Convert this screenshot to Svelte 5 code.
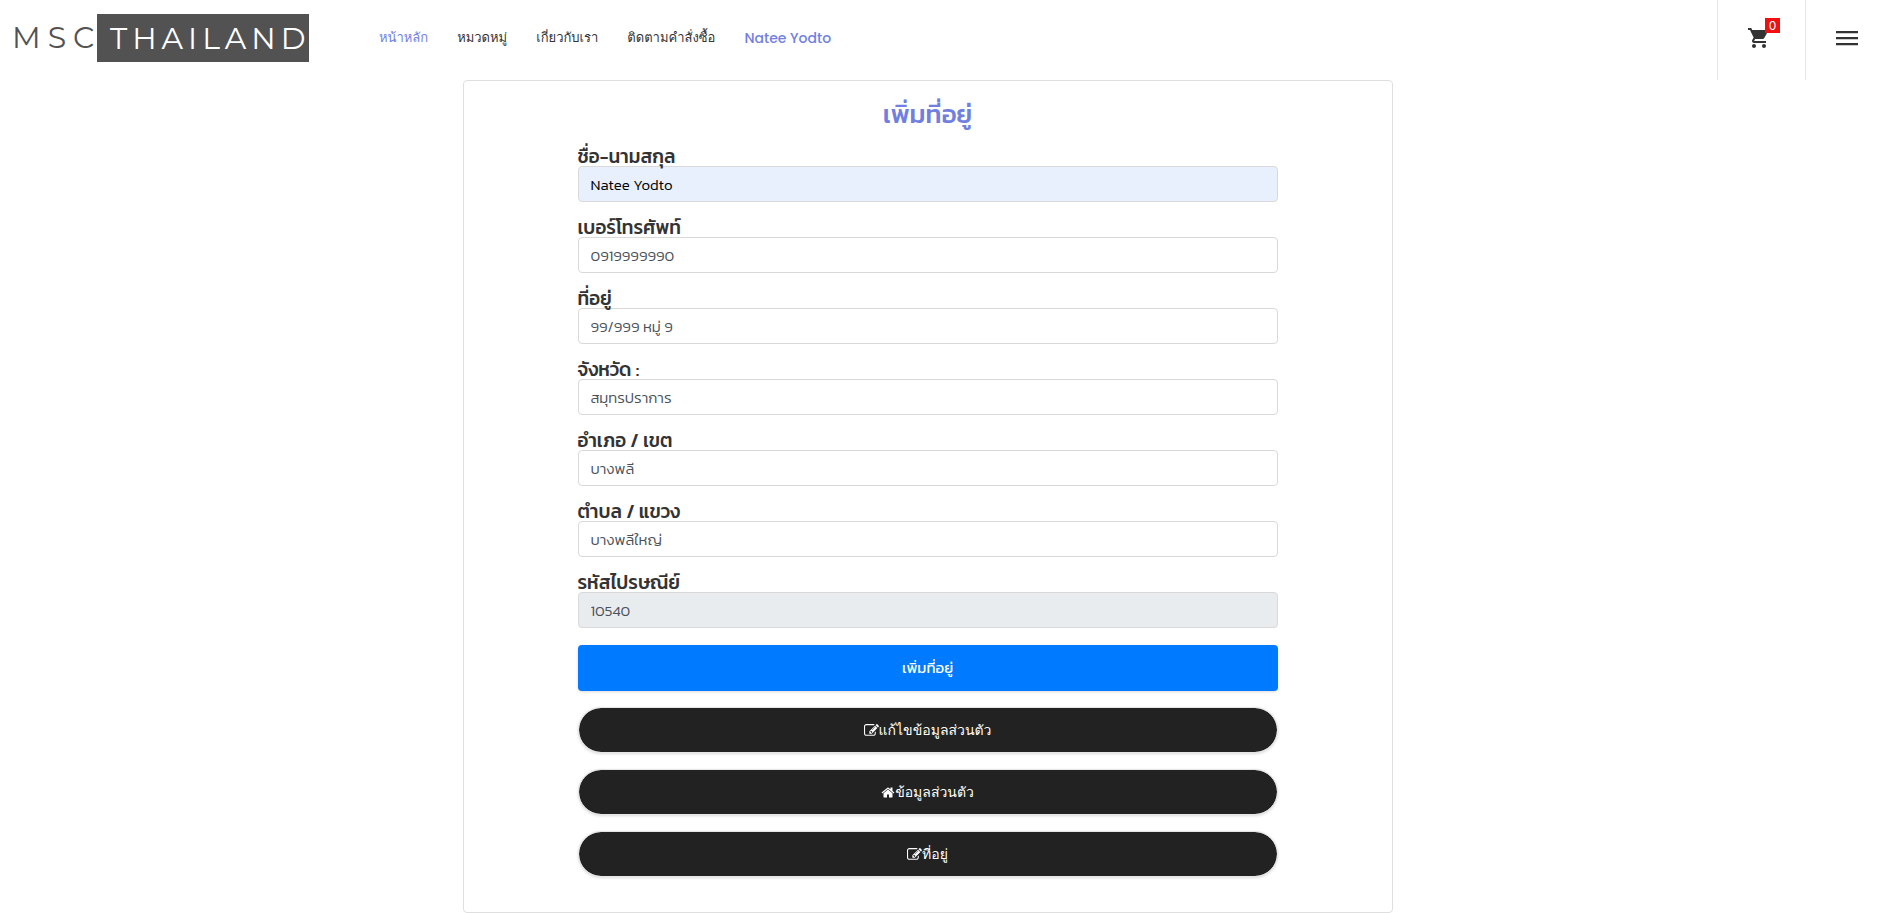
<script>
  const links = [
    { text: 'หน้าหลัก', active: true },
    { text: 'หมวดหมู่' },
    { text: 'เกี่ยวกับเรา' },
    { text: 'ติดตามคำสั่งซื้อ' },
  ];

  let fields = $state([
    { id: 'name', label: 'ชื่อ-นามสกุล', value: 'Natee Yodto', kind: 'autofill' },
    { id: 'phone', label: 'เบอร์โทรศัพท์', value: '0919999990' },
    { id: 'address', label: 'ที่อยู่', value: '99/999 หมู่ 9' },
    { id: 'province', label: 'จังหวัด :', value: 'สมุทรปราการ' },
    { id: 'district', label: 'อำเภอ / เขต', value: 'บางพลี' },
    { id: 'subdistrict', label: 'ตำบล / แขวง', value: 'บางพลีใหญ่' },
    { id: 'zip', label: 'รหัสไปรษณีย์', value: '10540', kind: 'locked' },
  ]);

  const actions = [
    { text: 'แก้ไขข้อมูลส่วนตัว', icon: 'edit' },
    { text: 'ข้อมูลส่วนตัว', icon: 'home' },
    { text: 'ที่อยู่', icon: 'edit' },
  ];
</script>

<header>
  <a class="logo" href="#home"><span class="msc">MSC</span><span class="thailand">THAILAND</span></a>
  <nav>
    {#each links as link}
      <a href="#top" class:active={link.active}>{link.text}</a>
    {/each}
    <a href="#account" class="user">Natee Yodto</a>
  </nav>
  <div class="tools">
    <button class="tool" aria-label="ตะกร้าสินค้า">
      <span class="cart">
        <svg width="24" height="24" viewBox="0 0 24 24" fill="#333" aria-hidden="true">
          <path d="M7 18c-1.1 0-1.99.9-1.99 2S5.900 22 7 22s2-.9 2-2-.9-2-2-2zM1 2v2h2l3.600 7.590-1.350 2.450c-.16.28-.25.61-.25.96 0 1.100.9 2 2 2h12v-2H7.420c-.14 0-.25-.11-.25-.25l.03-.12.9-1.630h7.450c.75 0 1.410-.41 1.750-1.030l3.580-6.490c.08-.14.12-.31.12-.48 0-.55-.45-1-1-1H5.210l-.94-2H1zm16 16c-1.100 0-1.990.9-1.990 2s.89 2 1.990 2 2-.9 2-2-.9-2-2-2z" />
        </svg>
        <span class="badge">0</span>
      </span>
    </button>
    <button class="tool menu" aria-label="เมนู">
      <svg width="22" height="15" viewBox="0 0 22 15" fill="#333" aria-hidden="true">
        <path d="M0 0h22v2.300H0zM0 6h22v2.300H0zM0 12h22v2.300H0z" />
      </svg>
    </button>
  </div>
</header>

<main>
  <section class="card">
    <form onsubmit={(e) => e.preventDefault()}>
      <h1>เพิ่มที่อยู่</h1>
      {#each fields as field}
        <div class="field">
          <label for={field.id}>{field.label}</label>
          <input
            id={field.id}
            type="text"
            class={field.kind}
            readonly={field.kind === 'locked'}
            bind:value={field.value}
          />
        </div>
      {/each}
      <button class="submit" type="submit">เพิ่มที่อยู่</button>
      {#each actions as action}
        <button class="pill" type="button">
          {#if action.icon === 'edit'}
            <svg width="15" height="15" viewBox="0 0 1792 1792" fill="#fff" aria-hidden="true">
              <path d="M888 1184l116-116-152-152-116 116v56h96v96h56zm440-720q-16-16-33 1l-350 350q-17 17-1 33t33-1l350-350q17-17 1-33zm80 594v190q0 119-84.500 203.500t-203.500 84.500h-832q-119 0-203.500-84.500t-84.500-203.500v-832q0-119 84.500-203.500t203.500-84.500h832q63 0 117 25 15 7 18 23 3 17-9 29l-49 49q-14 14-32 8-23-6-45-6h-832q-66 0-113 47t-47 113v832q0 66 47 113t113 47h832q66 0 113-47t47-113v-126q0-13 9-22l64-64q15-15 35-7t20 29zm-96-738l288 288-672 672h-288v-288zm444 132l-92 92-288-288 92-92q28-28 68-28t68 28l152 152q28 28 28 68t-28 68z" />
            </svg>
          {:else}
            <svg width="14" height="15" viewBox="0 0 1792 1792" fill="#fff" aria-hidden="true">
              <path d="M1472 992v480q0 26-19 45t-45 19h-384v-384h-256v384h-384q-26 0-45-19t-19-45v-480q0-1 .5-3t.5-3l575-474 575 474q1 2 1 6zm223-69l-62 74q-8 9-21 11h-3q-13 0-21-7l-692-577-692 577q-12 8-24 7-13-2-21-11l-62-74q-8-10-7-23.500t11-21.500l719-599q32-26 76-26t76 26l244 204v-195q0-14 9-23t23-9h192q14 0 23 9t9 23v408l219 182q10 8 11 21.500t-7 23.500z" />
            </svg>
          {/if}
          <span>{action.text}</span>
        </button>
      {/each}
    </form>
  </section>
</main>

<style>
  :global(body) {
    margin: 0;
    background: #fff;
    color: #333;
    font-family: Kanit, 'Noto Sans Thai', 'Noto Sans', sans-serif;
  }

  * {
    box-sizing: border-box;
  }

  header {
    display: flex;
    align-items: stretch;
    height: 80px;
  }

  .logo {
    display: flex;
    align-items: center;
    align-self: flex-start;
    width: 297px;
    height: 48px;
    margin: 14px 70px 0 12px;
    color: #525252;
    font: 400 30px/50px Montserrat, Inter, sans-serif;
    letter-spacing: 5px;
    text-decoration: none;
  }

  .msc {
    width: 85px;
    flex: none;
    letter-spacing: 7px;
  }

  .thailand {
    flex: 1;
    min-width: 0;
    height: 48px;
    padding-left: 13px;
    background: #525252;
    color: #fff;
  }

  nav {
    display: flex;
    align-items: center;
    gap: 29px;
    height: 76px;
    font: 13px/20px Tahoma, Loma, Waree, 'Noto Sans Thai Looped', Sarabun, 'Noto Sans Thai', sans-serif;
  }

  nav a {
    color: #333;
    text-decoration: none;
    white-space: nowrap;
  }

  nav .active,
  nav .user {
    color: #717fe0;
  }

  nav .user {
    font: 500 14px/20px Poppins, Inter, sans-serif;
  }

  .tools {
    display: flex;
    margin-left: auto;
  }

  .tool {
    display: flex;
    align-items: center;
    justify-content: center;
    width: 88px;
    height: 80px;
    padding: 0 0 4px;
    border: 0;
    border-left: 1px solid #e6e6e6;
    background: none;
  }

  .menu {
    width: 74px;
    padding: 0 0 4px 8px;
  }

  .cart {
    position: relative;
    display: flex;
    margin-right: 5px;
  }

  .badge {
    position: absolute;
    top: -8px;
    right: -9px;
    width: 15px;
    height: 15px;
    background: #f01010;
    color: #fff;
    font: 12px/15px Inter, sans-serif;
    text-align: center;
  }

  main {
    padding: 0 24px 1px 0;
  }

  .card {
    max-width: 930px;
    margin: 0 auto;
    padding: 0 16px 35px;
    border: 1px solid #dfdfdf;
    border-radius: 4px;
  }

  form {
    display: flex;
    flex-direction: column;
    max-width: 700px;
    margin: 0 auto;
  }

  h1 {
    margin: 15px 0;
    color: #717fe0;
    font-size: 26px;
    font-weight: 500;
    line-height: 36px;
    text-align: center;
  }

  .field {
    display: flex;
    flex-direction: column;
    margin-bottom: 16px;
  }

  /* Lifted above the input so that low vowel marks stay visible. */
  label {
    z-index: 1;
    font-size: 19px;
    font-weight: 500;
    line-height: 19px;
  }

  input {
    width: 100%;
    height: 36px;
    padding: 0 12px;
    border: 1px solid #d9d9d9;
    border-radius: 4px;
    background: #fff;
    color: #495057;
    font: 300 15px/20px Kanit, Inter, 'Noto Sans Thai', sans-serif;
  }

  .autofill {
    background: #e8f0fe;
    color: #000;
  }

  .locked {
    background: #e9ecef;
  }

  .submit,
  .pill {
    display: flex;
    align-items: center;
    justify-content: center;
    height: 46px;
    margin-bottom: 16px;
    color: #fff;
    font: 500 14px/20px Tahoma, Loma, Waree, 'Noto Sans Thai Looped', Sarabun, 'Noto Sans Thai', sans-serif;
    box-shadow: 0 1px 3px rgba(0, 0, 0, 0.15);
  }

  .submit {
    margin-top: 1px;
    border: 0;
    border-radius: 4px;
    background: #007bff;
    font: 400 15px/20px Kanit, 'Noto Sans Thai', sans-serif;
  }

  .pill {
    border: 1px solid #e6e6e6;
    border-radius: 23px;
    background: #222;
    background-clip: padding-box;
  }

  .pill:last-child {
    margin-bottom: 0;
  }
</style>
